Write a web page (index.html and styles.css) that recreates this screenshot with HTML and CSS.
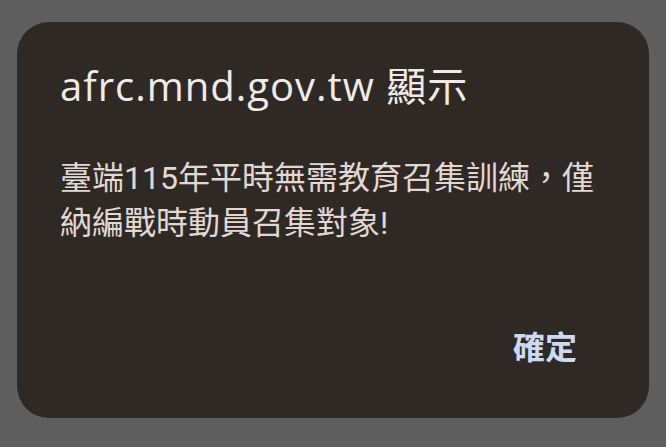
FILE: index.html
```html
<!DOCTYPE html>
<html lang="zh-Hant">
<head>
<meta charset="utf-8">
<title>afrc.mnd.gov.tw 顯示</title>
<link rel="stylesheet" href="styles.css">
</head>
<body>
  <div class="dialog" role="alertdialog">
    <h1 class="dialog-title">afrc.mnd.gov.tw 顯示</h1>
    <p class="dialog-message">臺端115年平時無需教育召集訓練，僅納編戰時動員召集對象!</p>
    <div class="dialog-actions">
      <button class="dialog-button" type="button">確定</button>
    </div>
  </div>
</body>
</html>
```

FILE: styles.css
```css
html, body {
  margin: 0;
  height: 100%;
}

body {
  background: #5e5e5e;
  padding: 22px 17px 29px 17px;
  box-sizing: border-box;
}

.dialog {
  box-sizing: border-box;
  width: 632px;
  height: 396px;
  background: #2f2925;
  border-radius: 32px;
  padding: 40px 45px 47px 43px;
  display: flex;
  flex-direction: column;
}

.dialog-title {
  margin: 0;
  font-family: "Open Sans", "Noto Sans CJK TC", sans-serif;
  font-weight: 400;
  font-size: 40px;
  line-height: 48px;
  letter-spacing: 1px;
  color: #f0ebe8;
}

.dialog-message {
  margin: 46px 0 0 0;
  font-family: Roboto, "Noto Sans CJK TC", sans-serif;
  font-size: 32px;
  line-height: 45px;
  color: #e2d8d4;
}

.dialog-actions {
  margin-top: auto;
  display: flex;
  justify-content: flex-end;
  padding-right: 27px;
}

.dialog-button {
  background: none;
  border: 0;
  padding: 0;
  font-family: Roboto, "Noto Sans CJK TC", sans-serif;
  font-weight: 700;
  font-size: 32px;
  line-height: 45px;
  color: #cddaf3;
}
```
